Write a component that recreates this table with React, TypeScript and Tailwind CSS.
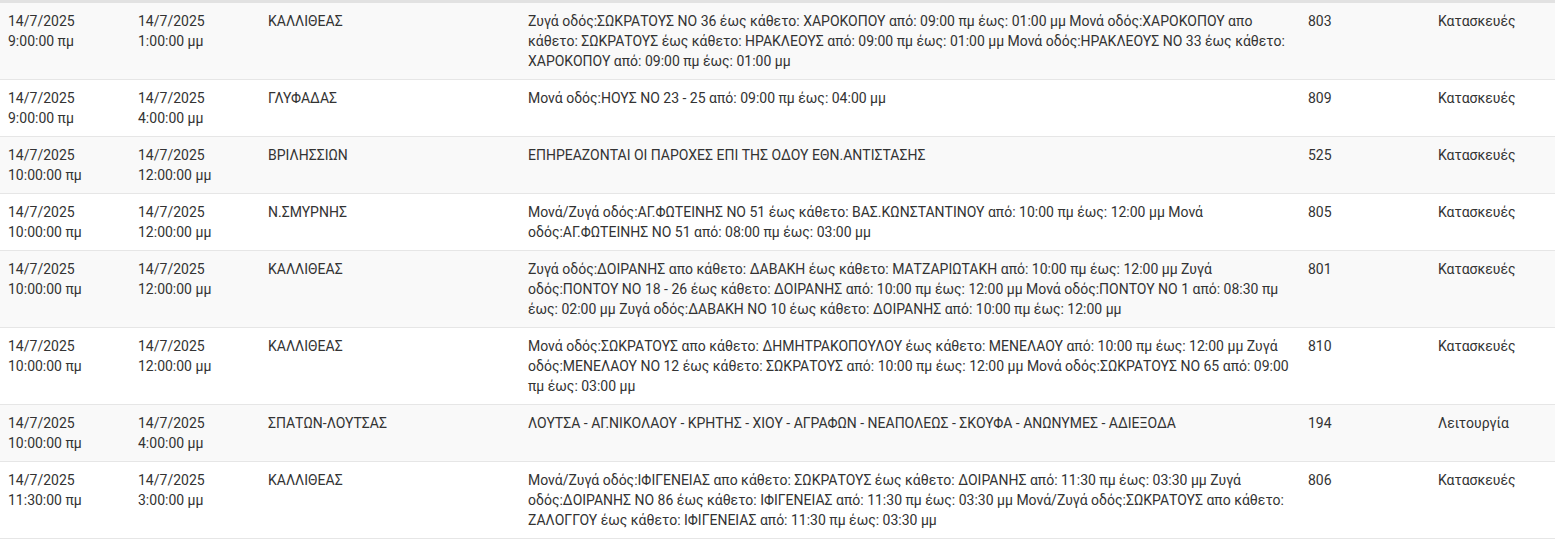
import React from 'react';

type Outage = {
  from: [string, string];
  to: [string, string];
  area: string;
  details: string;
  code: number;
  kind: string;
};

const rows: Outage[] = [
  {
    from: ['14/7/2025', '9:00:00 πμ'],
    to: ['14/7/2025', '1:00:00 μμ'],
    area: 'ΚΑΛΛΙΘΕΑΣ',
    details:
      'Ζυγά οδός:ΣΩΚΡΑΤΟΥΣ ΝΟ 36 έως κάθετο: ΧΑΡΟΚΟΠΟΥ από: 09:00 πμ έως: 01:00 μμ Μονά οδός:ΧΑΡΟΚΟΠΟΥ απο κάθετο: ΣΩΚΡΑΤΟΥΣ έως κάθετο: ΗΡΑΚΛΕΟΥΣ από: 09:00 πμ έως: 01:00 μμ Μονά οδός:ΗΡΑΚΛΕΟΥΣ ΝΟ 33 έως κάθετο: ΧΑΡΟΚΟΠΟΥ από: 09:00 πμ έως: 01:00 μμ',
    code: 803,
    kind: 'Κατασκευές',
  },
  {
    from: ['14/7/2025', '9:00:00 πμ'],
    to: ['14/7/2025', '4:00:00 μμ'],
    area: 'ΓΛΥΦΑΔΑΣ',
    details: 'Μονά οδός:ΗΟΥΣ ΝΟ 23 - 25 από: 09:00 πμ έως: 04:00 μμ',
    code: 809,
    kind: 'Κατασκευές',
  },
  {
    from: ['14/7/2025', '10:00:00 πμ'],
    to: ['14/7/2025', '12:00:00 μμ'],
    area: 'ΒΡΙΛΗΣΣΙΩΝ',
    details: 'ΕΠΗΡΕΑΖΟΝΤΑΙ ΟΙ ΠΑΡΟΧΕΣ ΕΠΙ ΤΗΣ ΟΔΟΥ ΕΘΝ.ΑΝΤΙΣΤΑΣΗΣ',
    code: 525,
    kind: 'Κατασκευές',
  },
  {
    from: ['14/7/2025', '10:00:00 πμ'],
    to: ['14/7/2025', '12:00:00 μμ'],
    area: 'Ν.ΣΜΥΡΝΗΣ',
    details:
      'Μονά/Ζυγά οδός:ΑΓ.ΦΩΤΕΙΝΗΣ ΝΟ 51 έως κάθετο: ΒΑΣ.ΚΩΝΣΤΑΝΤΙΝΟΥ από: 10:00 πμ έως: 12:00 μμ Μονά οδός:ΑΓ.ΦΩΤΕΙΝΗΣ ΝΟ 51 από: 08:00 πμ έως: 03:00 μμ',
    code: 805,
    kind: 'Κατασκευές',
  },
  {
    from: ['14/7/2025', '10:00:00 πμ'],
    to: ['14/7/2025', '12:00:00 μμ'],
    area: 'ΚΑΛΛΙΘΕΑΣ',
    details:
      'Ζυγά οδός:ΔΟΙΡΑΝΗΣ απο κάθετο: ΔΑΒΑΚΗ έως κάθετο: ΜΑΤΖΑΡΙΩΤΑΚΗ από: 10:00 πμ έως: 12:00 μμ Ζυγά οδός:ΠΟΝΤΟΥ ΝΟ 18 - 26 έως κάθετο: ΔΟΙΡΑΝΗΣ από: 10:00 πμ έως: 12:00 μμ Μονά οδός:ΠΟΝΤΟΥ ΝΟ 1 από: 08:30 πμ έως: 02:00 μμ Ζυγά οδός:ΔΑΒΑΚΗ ΝΟ 10 έως κάθετο: ΔΟΙΡΑΝΗΣ από: 10:00 πμ έως: 12:00 μμ',
    code: 801,
    kind: 'Κατασκευές',
  },
  {
    from: ['14/7/2025', '10:00:00 πμ'],
    to: ['14/7/2025', '12:00:00 μμ'],
    area: 'ΚΑΛΛΙΘΕΑΣ',
    details:
      'Μονά οδός:ΣΩΚΡΑΤΟΥΣ απο κάθετο: ΔΗΜΗΤΡΑΚΟΠΟΥΛΟΥ έως κάθετο: ΜΕΝΕΛΑΟΥ από: 10:00 πμ έως: 12:00 μμ Ζυγά οδός:ΜΕΝΕΛΑΟΥ ΝΟ 12 έως κάθετο: ΣΩΚΡΑΤΟΥΣ από: 10:00 πμ έως: 12:00 μμ Μονά οδός:ΣΩΚΡΑΤΟΥΣ ΝΟ 65 από: 09:00 πμ έως: 03:00 μμ',
    code: 810,
    kind: 'Κατασκευές',
  },
  {
    from: ['14/7/2025', '10:00:00 πμ'],
    to: ['14/7/2025', '4:00:00 μμ'],
    area: 'ΣΠΑΤΩΝ-ΛΟΥΤΣΑΣ',
    details: 'ΛΟΥΤΣΑ - ΑΓ.ΝΙΚΟΛΑΟΥ - ΚΡΗΤΗΣ - ΧΙΟΥ - ΑΓΡΑΦΩΝ - ΝΕΑΠΟΛΕΩΣ - ΣΚΟΥΦΑ - ΑΝΩΝΥΜΕΣ - ΑΔΙΕΞΟΔΑ',
    code: 194,
    kind: 'Λειτουργία',
  },
  {
    from: ['14/7/2025', '11:30:00 πμ'],
    to: ['14/7/2025', '3:00:00 μμ'],
    area: 'ΚΑΛΛΙΘΕΑΣ',
    details:
      'Μονά/Ζυγά οδός:ΙΦΙΓΕΝΕΙΑΣ απο κάθετο: ΣΩΚΡΑΤΟΥΣ έως κάθετο: ΔΟΙΡΑΝΗΣ από: 11:30 πμ έως: 03:30 μμ Ζυγά οδός:ΔΟΙΡΑΝΗΣ ΝΟ 86 έως κάθετο: ΙΦΙΓΕΝΕΙΑΣ από: 11:30 πμ έως: 03:30 μμ Μονά/Ζυγά οδός:ΣΩΚΡΑΤΟΥΣ απο κάθετο: ΖΑΛΟΓΓΟΥ έως κάθετο: ΙΦΙΓΕΝΕΙΑΣ από: 11:30 πμ έως: 03:30 μμ',
    code: 806,
    kind: 'Κατασκευές',
  },
];

const OutagesTable: React.FC = () => {
  return (
    <div className="w-[1555px] bg-white font-['Roboto','Noto_Sans',sans-serif] text-[14px] leading-5 text-[#333]">
      <table className="w-full table-fixed border-collapse border-t-[3px] border-[#e2e2e2]">
        <colgroup>
          <col className="w-[130px]" />
          <col className="w-[130px]" />
          <col className="w-[260px]" />
          <col className="w-[780px]" />
          <col className="w-[130px]" />
          <col />
        </colgroup>
        <tbody>
          {rows.map((r, i) => (
            <tr key={i} className={`border-b border-[#e6e6e6] align-top ${i % 2 === 0 ? 'bg-[#f9f9f9]' : 'bg-white'}`}>
              <td className="px-2 py-2">
                {r.from[0]}
                <br />
                {r.from[1]}
              </td>
              <td className="px-2 py-2">
                {r.to[0]}
                <br />
                {r.to[1]}
              </td>
              <td className="px-2 py-2">{r.area}</td>
              <td className="px-2 py-2">{r.details}</td>
              <td className="px-2 py-2">{r.code}</td>
              <td className="px-2 py-2">{r.kind}</td>
            </tr>
          ))}
        </tbody>
      </table>
    </div>
  );
};

export default OutagesTable;
